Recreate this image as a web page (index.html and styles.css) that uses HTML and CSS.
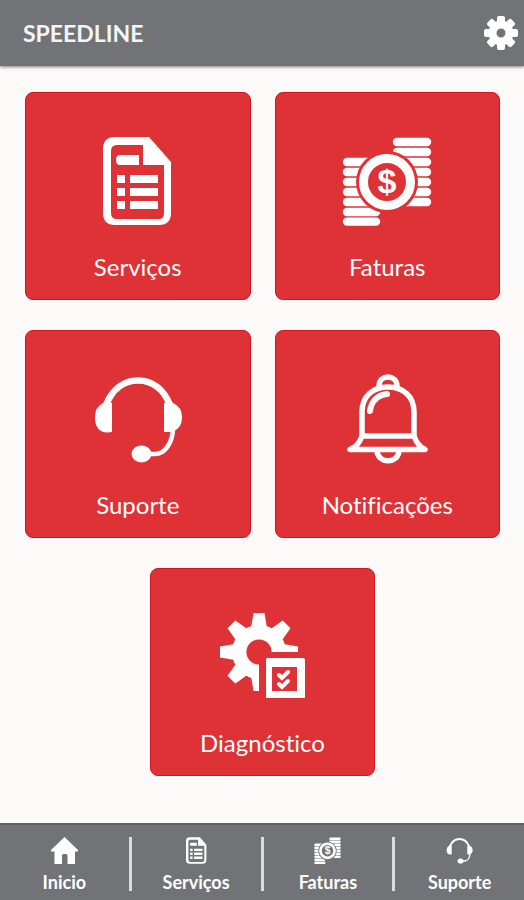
FILE: index.html
```html
<!DOCTYPE html>
<html lang="pt-BR">
<head>
  <meta charset="UTF-8" />
  <meta name="viewport" content="width=device-width, initial-scale=1.0"/>
  <title>Speedline</title>
  <link rel="stylesheet" href="styles.css">
</head>
<body>
  <header class="topbar">
    <h1 class="brand">SPEEDLINE</h1>
    <button class="settings" type="button" aria-label="Configurações">
      <svg viewBox="-18 -18 36 36">
        <defs><rect id="cog-tooth" x="-4" y="-17" width="8" height="9" rx="2"/></defs>
        <g fill="currentColor">
          <use href="#cog-tooth"/>
          <use href="#cog-tooth" transform="rotate(45)"/>
          <use href="#cog-tooth" transform="rotate(90)"/>
          <use href="#cog-tooth" transform="rotate(135)"/>
          <use href="#cog-tooth" transform="rotate(180)"/>
          <use href="#cog-tooth" transform="rotate(225)"/>
          <use href="#cog-tooth" transform="rotate(270)"/>
          <use href="#cog-tooth" transform="rotate(315)"/>
        </g>
        <circle r="8.500" fill="none" stroke="currentColor" stroke-width="8"/>
      </svg>
    </button>
  </header>

  <!-- The card icons are reused by the tab bar -->
  <main class="menu">
    <a class="card" href="#servicos">
      <svg class="card-icon" viewBox="0 0 90 90">
        <g id="icon-services">
          <path fill="currentColor" fill-rule="evenodd" d="M22 1H56L78 26V77Q78 89 66 89H22Q10 89 10 77V13Q10 1 22 1ZM24 9Q18 9 18 15V77Q18 83 24 83H66Q71 83 71 77V29H50V9Z"/>
          <path fill="currentColor" d="M27 19H46V29H27Q23 29 23 24T27 19ZM24 39h8v8h-8zM24 52h8v8h-8zM24 65h8v8h-8zM37 39h28v8H37zM37 52h28v8H37zM37 65h28v8H37z"/>
        </g>
      </svg>
      <span>Serviços</span>
    </a>
    <a class="card" href="#faturas">
      <svg class="card-icon" viewBox="0 0 90 90">
        <mask id="coin-gap">
          <rect width="90" height="90" fill="#fff"/>
          <circle cx="45" cy="46" r="31" fill="#000"/>
        </mask>
        <g id="icon-invoices">
          <path mask="url(#coin-gap)" fill="none" stroke="currentColor" stroke-width="8.400" stroke-linecap="round" d="M5 26H34M5 36H34M5 46H34M5 56H34M5 66H34M5 76H34M5 85.600H34M55 6H85M55 16H85M55 26H85M55 36H85M55 46H85M55 56H85M55 66H85"/>
          <circle cx="45" cy="46" r="23.500" fill="none" stroke="currentColor" stroke-width="9"/>
          <text class="coin-sign" x="45" y="57" text-anchor="middle">$</text>
        </g>
      </svg>
      <span>Faturas</span>
    </a>
    <a class="card" href="#suporte">
      <svg class="card-icon" viewBox="0 0 90 90">
        <g id="icon-support">
          <path fill="none" stroke="currentColor" stroke-width="6.500" d="M13 31C19 16 30 6.500 45 6.500S71 16 77 31"/>
          <path fill="currentColor" d="M10 29Q14 26 19 29V58Q2 61 2 43Q2 33 10 29ZM80 29Q76 26 71 29V58H77Q89 56 89 43Q89 33 80 29Z"/>
          <path fill="none" stroke="currentColor" stroke-width="4.500" d="M80 56C79 69 72 80 62 80H50"/>
          <ellipse cx="48.500" cy="80" rx="10" ry="8.500" fill="currentColor"/>
        </g>
      </svg>
      <span>Suporte</span>
    </a>
    <a class="card" href="#notificacoes">
      <svg class="card-icon" viewBox="0 0 90 90" fill="none" stroke="currentColor" stroke-width="5.500" stroke-linecap="round" stroke-linejoin="round">
        <path d="M37 12C37 0 55 0 55 12"/>
        <path d="M20 61V38C20 22 31 13 46 13S72 22 72 38V61"/>
        <path d="M20 62H72C74 68 78 73 83 75.500H8C14 73 18 68 20 62Z"/>
        <path d="M35 77C36 90 56 90 57 77"/>
        <path d="M28 37C29 28 35 21 45 20" stroke-width="6"/>
      </svg>
      <span>Notificações</span>
    </a>
    <a class="card" href="#diagnostico">
      <svg class="card-icon" viewBox="0 0 90 90">
        <defs>
          <path id="gear-tooth" d="M-8 -24L-5.500 -39H5.500L8 -24Z"/>
          <mask id="gear-cut">
            <rect width="90" height="90" fill="#fff"/>
            <rect x="41" y="40" width="49" height="50" fill="#000"/>
            <circle cx="41" cy="40" r="12.600" fill="#000"/>
          </mask>
        </defs>
        <g mask="url(#gear-cut)">
          <g fill="currentColor" transform="translate(41 40)">
            <circle r="27"/>
            <use href="#gear-tooth"/>
            <use href="#gear-tooth" transform="rotate(45)"/>
            <use href="#gear-tooth" transform="rotate(90)"/>
            <use href="#gear-tooth" transform="rotate(180)"/>
            <use href="#gear-tooth" transform="rotate(225)"/>
            <use href="#gear-tooth" transform="rotate(270)"/>
            <use href="#gear-tooth" transform="rotate(315)"/>
          </g>
        </g>
        <path fill="currentColor" fill-rule="evenodd" d="M49 46H85Q87 46 87 48V86H48V48Q48 46 49 46ZM54 55V79H79V55Z"/>
        <path fill="none" stroke="currentColor" stroke-width="4" stroke-linecap="round" d="M61 63L64 66L70 60M61 72L64 75L70 69"/>
      </svg>
      <span>Diagnóstico</span>
    </a>
  </main>

  <nav class="tabbar">
    <a class="tab" href="#inicio">
      <svg class="tab-icon" viewBox="0 0 27 27"><path fill="currentColor" d="M13.500 0L27 13V14.500H24V27H16.500V18.500Q16.500 17 15 17H12.500Q11 17 11 18.500V27H3.500V14.500H0V13Z"/></svg>
      <span>Inicio</span>
    </a>
    <a class="tab" href="#servicos">
      <svg class="tab-icon" viewBox="0 0 90 90"><use href="#icon-services"/></svg>
      <span>Serviços</span>
    </a>
    <a class="tab" href="#faturas">
      <svg class="tab-icon" viewBox="0 0 90 90"><use href="#icon-invoices"/></svg>
      <span>Faturas</span>
    </a>
    <a class="tab" href="#suporte">
      <svg class="tab-icon" viewBox="0 0 90 90"><use href="#icon-support"/></svg>
      <span>Suporte</span>
    </a>
  </nav>
</body>
</html>
```
FILE: styles.css
```css
* {
  box-sizing: border-box;
}
body {
  font-family: Lato, "Liberation Sans", sans-serif;
  font-variant-ligatures: none;
  background: #fcfaf9;
  color: white;
  margin: 0;
  min-height: 100vh;
  display: flex;
  flex-direction: column;
}
a {
  color: inherit;
  text-decoration: none;
}
.topbar {
  display: flex;
  align-items: center;
  justify-content: space-between;
  padding: 14px 5px 14px 23px;
  background: #727376;
  box-shadow: 0 1px 3px rgba(0, 0, 0, 0.5);
}
.brand {
  margin: 0;
  font-size: 23px;
  line-height: 38px;
  color: #f4f5f7;
}
.settings {
  width: 36px;
  height: 36px;
  padding: 0;
  border: none;
  background: none;
  color: white;
  cursor: pointer;
}
.settings svg {
  display: block;
}
.menu {
  flex: 1;
  display: flex;
  flex-wrap: wrap;
  justify-content: center;
  align-content: flex-start;
  gap: 30px 24px;
  padding: 26px 24px 47px 25px;
}
.card {
  width: calc(50% - 12px);
  display: flex;
  flex-direction: column;
  align-items: center;
  gap: 26px;
  padding: 43px 0 17px;
  background: #df3236;
  border: 1px solid #d3141c;
  border-radius: 8px;
  font-size: 24px;
  line-height: 30px;
}
.card-icon {
  width: 90px;
  height: 90px;
}
.coin-sign {
  font-family: "Liberation Sans", sans-serif;
  font-size: 34px;
  font-weight: bold;
  fill: currentColor;
}
.tabbar {
  display: flex;
  padding: 12px 0 9px;
  background: #727376;
  border-top: 2px solid #5f6062;
}
.tab {
  flex: 1;
  display: flex;
  flex-direction: column;
  align-items: center;
  gap: 9px;
  font-size: 18px;
  font-weight: bold;
  line-height: 18px;
}
.tab + .tab {
  border-left: 3px solid #dcdcdd;
}
.tab-icon {
  width: 27px;
  height: 27px;
}
```
